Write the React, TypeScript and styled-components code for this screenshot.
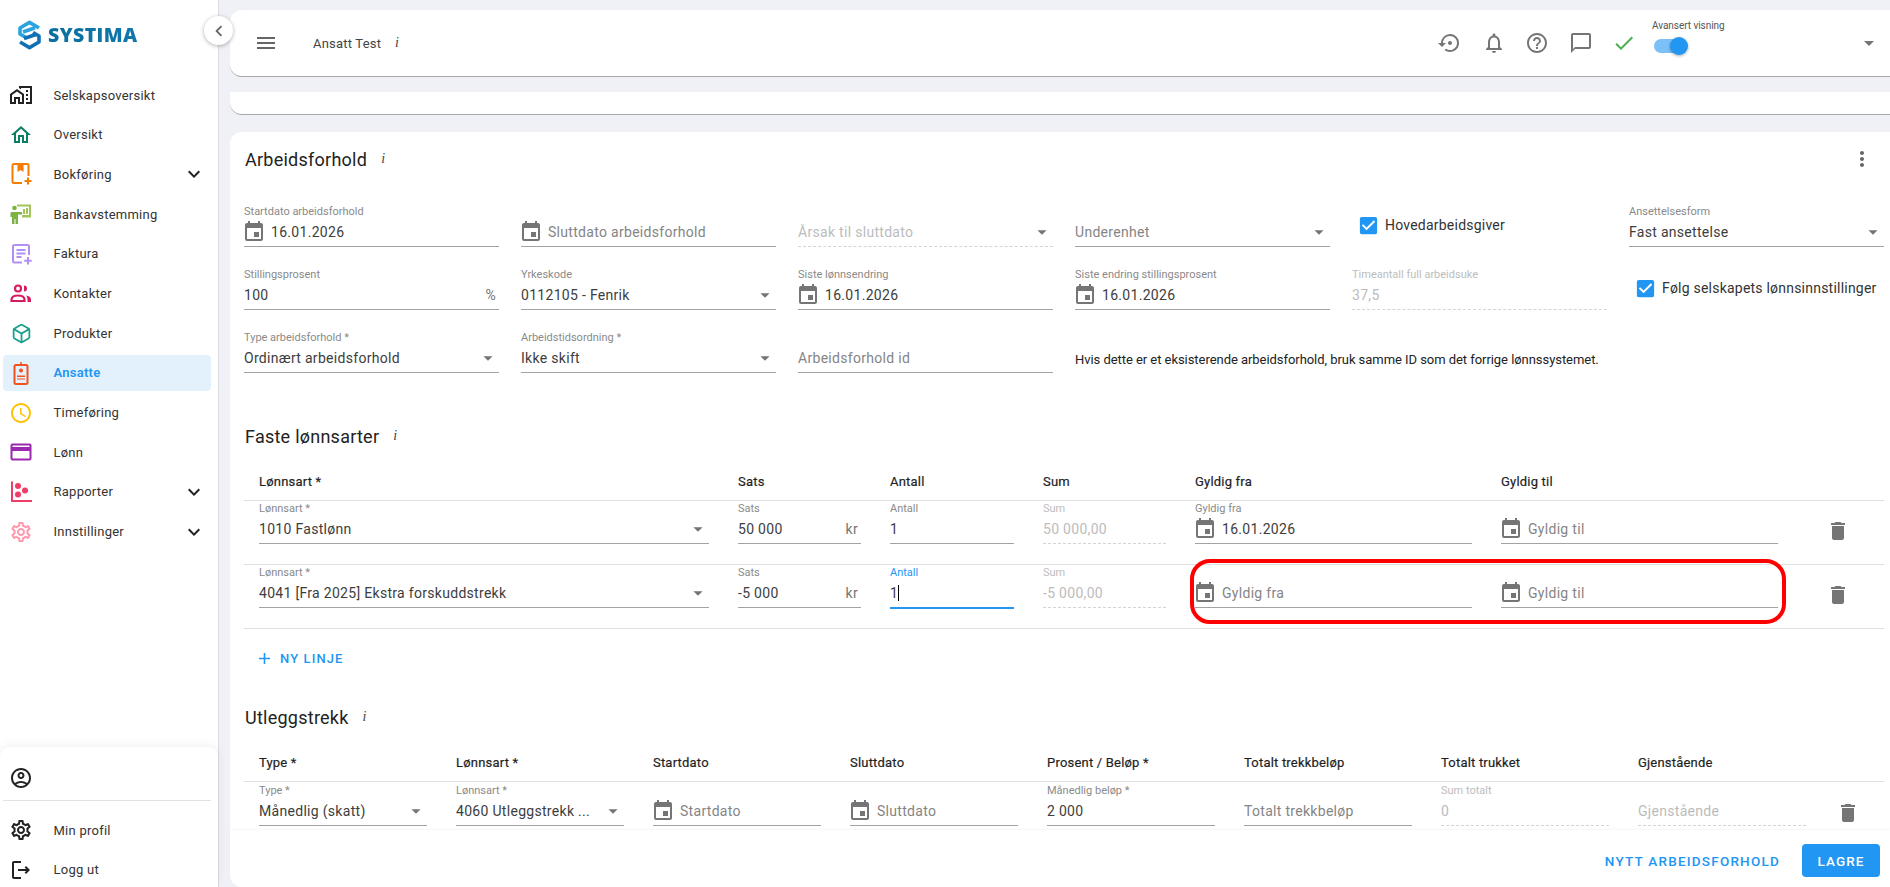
import React from "react";
import styled, { createGlobalStyle } from "styled-components";
import {
  MdAdd, MdArrowDropDown, MdCheck, MdCheckBox, MdChevronLeft, MdChatBubbleOutline, MdDelete, MdEvent,
  MdExpandMore, MdHelpOutline, MdMenu, MdMoreVert, MdNotificationsNone, MdOutlineAccessTime,
  MdOutlineAccountCircle, MdOutlineHome, MdOutlineHomeWork, MdOutlineLogout,
  MdOutlineSettings, MdSettingsBackupRestore,
} from "react-icons/md";
import { Box } from "lucide-react";

const Global = createGlobalStyle`
  html, body { margin: 0; height: 100%; overflow: hidden; background: #f0f1f7; }
  body { font-family: Roboto, "Liberation Sans", sans-serif; color: #333; }
  * { box-sizing: border-box; }
`;

const Page = styled.div`display: flex; width: 1890px; height: 887px; overflow: hidden;`;

/* ---------- sidebar ---------- */
const Sidebar = styled.aside`
  position: relative; flex: 0 0 219px; height: 887px; display: flex; flex-direction: column;
  background: #fff; border-right: 1px solid #dcdde2;
`;
const Brand = styled.div`height: 77px; flex: none; display: flex; align-items: flex-start; gap: 6px; padding: 20px 0 0 17px;`;
const BrandName = styled.span`
  font-family: "Open Sans", sans-serif; font-weight: 800; font-size: 19.5px; line-height: 30px; letter-spacing: .4px;
  background: linear-gradient(90deg, #0a6f9e, #1177ab); -webkit-background-clip: text; color: transparent;
`;
const Collapse = styled.button`
  position: absolute; left: 204px; top: 16px; width: 29px; height: 29px; border: 0; border-radius: 50%; padding: 0;
  background: #fff; box-shadow: 0 1px 4px rgba(0,0,0,.3); display: flex; align-items: center; justify-content: center;
  color: #666; font-size: 22px;
`;
const Nav = styled.nav`display: flex; flex-direction: column; gap: 3.7px; flex: 1;`;
const NavRow = styled.div<{ $active?: boolean }>`
  height: 36px; margin: 0 7px 0 3px; border-radius: 4px; padding: 0 5px 0 6px; display: flex; align-items: center;
  font-size: 13px; letter-spacing: .25px; color: ${(p) => (p.$active ? "#2196f3" : "#333")};
  font-weight: ${(p) => (p.$active ? 600 : 400)}; background: ${(p) => (p.$active ? "#e3f1fc" : "transparent")};
`;
const NavIcon = styled.span<{ $color?: string }>`
  flex: 0 0 24px; height: 24px; display: flex; align-items: center; justify-content: center; margin-right: 20.5px;
  color: ${(p) => p.$color || "#222"}; font-size: 24px;
`;
const NavChevron = styled.span`margin-left: auto; display: flex; font-size: 24px; color: #222;`;
const UserPanel = styled.div`
  height: 140px; flex: none; background: #fff; border-radius: 10px 10px 0 0; box-shadow: 0 -2px 8px rgba(0,0,0,.06); padding-top: 13px;
`;
const UserRow = styled.div`
  height: 41px; margin: 0 7px 0 3px; padding: 0 6px 5px; border-bottom: 1px solid #e2e2e2; display: flex; align-items: center;
`;
const PanelLinks = styled.div`display: flex; flex-direction: column; gap: 3.6px; padding-top: 11px;`;

/* ---------- main ---------- */
const Main = styled.main`flex: 1; min-width: 0; height: 887px; display: flex; flex-direction: column; padding: 10px 0 0 11px;`;
const TopBar = styled.header`
  flex: none; height: 67px; background: #fff; border-radius: 12px 0 0 12px; border-bottom: 1px solid #a8a8a8;
  display: flex; align-items: center; padding: 0 9px 0 24px; color: #757575;
`;
const Hamburger = styled.span`display: flex; font-size: 24px; color: #666; margin-right: 35px;`;
const PageTitle = styled.span`font-size: 13px; letter-spacing: .2px; color: #444; margin-right: 14px;`;
const InfoMark = styled.i`
  font-family: "Liberation Serif", serif; font-size: 14px; color: #444; font-style: italic;
`;
const ToolIcons = styled.div`margin-left: auto; display: flex; align-items: center; gap: 19.5px; font-size: 24px;`;
const ToolIcon = styled.span<{ $color?: string }>`display: flex; font-size: 24px; color: ${(p) => p.$color || "#757575"};`;
const ToggleBox = styled.div`
  width: 70px; margin: -7px 135px 0 16px; height: 40px; display: flex; flex-direction: column;
`;
const ToggleLabel = styled.span`font-size: 10px; line-height: 12px; letter-spacing: -.05px; color: #555; white-space: nowrap;`;
const ToggleTrack = styled.span`
  position: relative; display: block; width: 32px; height: 14px; margin: 7px 0 0 2px; border-radius: 7px; background: #7cc0f8;
`;
const ToggleThumb = styled.span`
  position: absolute; left: 16px; top: -2px; width: 18px; height: 18px; border-radius: 50%; background: #2196f3;
  box-shadow: 0 1px 3px rgba(0,0,0,.35);
`;
const Strip = styled.div`
  flex: none; height: 23px; margin: 15px 0 17px; background: #fff; border-radius: 0 0 0 12px; border-bottom: 1px solid #a8a8a8;
`;
const Card = styled.section`
  flex: 1; min-height: 0; overflow: hidden; background: #fff; border-radius: 12px 0 0 0; padding: 16px 6px 0 14px; position: relative;
`;
const SectionHead = styled.div<{ $top?: number }>`
  height: 22px; margin-top: ${(p) => p.$top || 0}px; display: flex; align-items: center; gap: 14px;
`;
const SectionTitle = styled.h2`margin: 0; padding-left: 1px; font-size: 18px; font-weight: 400; letter-spacing: .25px; color: #222;`;
const More = styled.span`margin-left: auto; margin-right: 10px; display: flex; font-size: 24px; color: #666;`;
const FormGrid = styled.div`
  display: grid; grid-template-columns: repeat(6, 255px); column-gap: 22px; row-gap: 21px; margin-top: 35px;
`;
const FieldBox = styled.div`height: 42px; display: flex; flex-direction: column; min-width: 0;`;
const FieldLabel = styled.label<{ $tone?: string }>`
  height: 12px; font-size: 11px; line-height: 14px; white-space: nowrap;
  color: ${(p) => p.$tone === "blue" ? "#2196f3" : p.$tone === "off" ? "#bdbdbd" : "#8a8a8a"};
`;
const FieldInput = styled.div<{ $tone?: string }>`
  height: 30px; display: flex; align-items: center; min-width: 0; font-size: 14px; letter-spacing: .3px; white-space: nowrap;
  border-bottom: 1px ${(p) => (p.$tone === "off" ? "dashed #d4d4d4" : "solid #a3a3a3")};
  ${(p) => p.$tone === "blue" && "border-bottom-color: #2196f3; box-shadow: 0 1px 0 #2196f3;"}
`;
const ValueText = styled.span<{ $tone?: string }>`
  flex: 1; min-width: 0; overflow: hidden; color: ${(p) => p.$tone === "ph" ? "#858585" : p.$tone === "off" ? "#bcbcbc" : "#3d3d3d"};
`;
const DateIcon = styled.span`display: flex; font-size: 24px; color: #757575; margin: 0 5px 0 -2px;`;
const Caret = styled.span`display: inline-block; width: 1px; height: 16px; background: #000; vertical-align: -3px;`;
const Suffix = styled.span`color: #757575; padding-right: 3px; font-size: 14px;`;
const SelectArrow = styled.span`display: flex; font-size: 22px; color: #757575;`;
const CheckLine = styled.div`
  height: 42px; display: flex; align-items: center; gap: 5px; padding: 0 0 2px 5px; font-size: 14px; letter-spacing: .22px;
  color: #333; white-space: nowrap; & svg { color: #2196f3; font-size: 23px; flex: none; }
`;
const Note = styled.div`grid-column: span 3; height: 42px; padding-top: 21px; font-size: 13px; line-height: 16px; letter-spacing: -.05px; color: #222; white-space: nowrap;`;
const TableHeadRow = styled.div<{ $cols: string }>`
  display: grid; grid-template-columns: ${(p) => p.$cols}; column-gap: 29px; height: 37px; margin-top: 17px; padding: 0 15px 1px; align-items: center;
  border-bottom: 1px solid #e0e0e0; font-size: 13px; font-weight: 400; letter-spacing: .2px; color: #1f1f1f; -webkit-text-stroke: .2px #1f1f1f;
`;
const TableRow = styled.div<{ $cols: string; $pad?: number }>`
  display: grid; grid-template-columns: ${(p) => p.$cols}; column-gap: 29px; height: 64px; padding: ${(p) => p.$pad ?? 1}px 15px 0; border-bottom: 1px solid #e0e0e0;
`;
const TrashCell = styled.div`display: flex; justify-content: center; padding-top: 17px; font-size: 24px; color: #757575;`;
const AddLine = styled.button`
  height: 30px; margin: 14px 0 1px 11px; border: 0; background: none; padding: 0; display: flex; align-items: center; gap: 6px; color: #2196f3;
  font: 500 13px Roboto, sans-serif; letter-spacing: 1.1px; & svg { font-size: 19px; }
`;
const FooterBar = styled.footer`
  flex: none; height: 57px; background: #fff; border-radius: 0 0 0 12px; box-shadow: 0 -1px 2px rgba(0,0,0,.04); display: flex; align-items: center; justify-content: flex-end;
  padding: 4px 10px 0 0; gap: 22px; position: relative;
`;
const TextBtn = styled.button`border: 0; background: none; padding: 0; color: #2196f3; font: 500 13.5px Roboto, sans-serif; letter-spacing: 1.22px;`;
const PrimaryBtn = styled.button`
  width: 78px; height: 33px; border: 0; border-radius: 4px; background: #2196f3; color: #fff; font: 500 13.5px Roboto, sans-serif; letter-spacing: 1.1px;
`;
const Annotation = styled.div`
  position: absolute; left: 960px; top: 427px; width: 596px; height: 65px; border: 4px solid #f00; border-radius: 20px; pointer-events: none;
`;

/* ---------- drawn icons ---------- */
const Logo = () => (
  <svg width="25" height="30" viewBox="0 0 25 30" fill="none" strokeWidth="3.6" strokeLinejoin="round">
    <path d="M22 8 L12.5 2.4 L3 8 V14 L9 17.5" stroke="#2aa3df" />
    <path d="M6 12 L18 7.8" stroke="#2aa3df" />
    <path d="M7 18.5 L19 14.5" stroke="#1270b4" />
    <path d="M16 12.5 L22 16 V22 L12.5 27.6 L3 22" stroke="#1270b4" />
  </svg>
);
const BookIcon = () => (
  <svg width="24" height="24" viewBox="0 0 24 24" fill="none">
    <path d="M13 21H5a1.5 1.5 0 0 1-1.5-1.5v-16A1.5 1.5 0 0 1 5 2h13a1.5 1.5 0 0 1 1.5 1.5V14" stroke="#f57c00" strokeWidth="2" />
    <path d="M8.5 2h6v8l-3-2-3 2z" fill="#f57c00" />
    <path d="M19 15.5v7M15.5 19h7" stroke="#f57c00" strokeWidth="2" />
  </svg>
);
const BankIcon = () => (
  <svg width="24" height="24" viewBox="0 0 24 24">
    <path d="M8 2.5h14v13H13v-2.5h7V4.5H8z" fill="#a4c45a" />
    <path d="M14 12V7h2v5zM17 12V6h2v6z" fill="#a4c45a" />
    <circle cx="5.5" cy="6" r="2.3" fill="#7cb342" />
    <path d="M2 10h11v2.5H9V22H6.5v-5h-1v5H3v-7H1.5v-3.5A1.5 1.5 0 0 1 2 10z" fill="#7cb342" />
  </svg>
);
const InvoiceIcon = () => (
  <svg width="24" height="24" viewBox="0 0 24 24" fill="none" stroke="#b190f5" strokeWidth="2">
    <path d="M13 20.5H5.5A1.5 1.5 0 0 1 4 19V4.5A1.5 1.5 0 0 1 5.500 3h13A1.5 1.5 0 0 1 20 4.500V13" />
    <path d="M7.500 8h9M7.500 11.500h9M7.500 15h5" />
    <path d="M19 15v7.500M15.200 18.800h7.500" />
  </svg>
);
const PeopleIcon = () => (
  <svg width="24" height="24" viewBox="0 0 24 24" fill="none">
    <circle cx="9" cy="7.500" r="3" stroke="#d81b60" strokeWidth="2.2" />
    <path d="M15 4.500a3 3 0 0 1 0 6z" fill="#d81b60" />
    <path d="M2.500 20v-1.500C2.500 16 5.500 14.500 9 14.500s6.500 1.500 6.500 4V20z" stroke="#d81b60" strokeWidth="2.2" />
    <path d="M17 14.500c2.800.3 5 1.700 5 4V21h-3.500v-2.500c0-1.600-.6-2.900-1.500-4z" fill="#d81b60" />
  </svg>
);
const BadgeIcon = () => (
  <svg width="24" height="24" viewBox="0 0 24 24" fill="none">
    <rect x="5.500" y="4" width="13" height="19" rx="1.500" stroke="#f4511e" strokeWidth="2" />
    <path d="M12 1v4" stroke="#f4511e" strokeWidth="1.5" />
    <circle cx="12" cy="9.500" r="2" fill="#f4511e" />
    <path d="M8 14.500h8v1.500H8zM8 17.500h8v1H8z" fill="#f4511e" />
  </svg>
);
const ReportIcon = () => (
  <svg width="24" height="24" viewBox="0 0 24 24" fill="#ef3d67">
    <path d="M2 1.500h2V20h19v2H2z" />
    <circle cx="9" cy="6" r="3" />
    <circle cx="9" cy="14.500" r="3" />
    <circle cx="16" cy="10.500" r="3" />
  </svg>
);
const CardIcon = () => (
  <svg width="24" height="24" viewBox="0 0 24 24" fill="none">
    <rect x="2.500" y="4.500" width="19" height="15" rx="1" stroke="#9c27b0" strokeWidth="2" />
    <rect x="3" y="7" width="18" height="4" fill="#9c27b0" />
  </svg>
);

/* ---------- field ---------- */
type FieldProps = {
  label?: string; value?: string; placeholder?: string; kind?: "date" | "select" | "text";
  suffix?: string; off?: boolean; focus?: boolean;
};
const Field = ({ label, value, placeholder, kind = "text", suffix, off, focus }: FieldProps) => {
  const tone = off ? "off" : focus ? "blue" : undefined;
  return (
    <FieldBox>
      <FieldLabel $tone={tone}>{label}</FieldLabel>
      <FieldInput $tone={tone}>
        {kind === "date" && <DateIcon><MdEvent /></DateIcon>}
        <ValueText $tone={off ? "off" : value ? undefined : "ph"}>
          {value || placeholder}{focus && <Caret />}
        </ValueText>
        {suffix && <Suffix>{suffix}</Suffix>}
        {kind === "select" && <SelectArrow><MdArrowDropDown /></SelectArrow>}
      </FieldInput>
    </FieldBox>
  );
};

const navItems: { label: string; icon: React.ReactNode; color?: string; chevron?: boolean; active?: boolean }[] = [
  { label: "Selskapsoversikt", icon: <MdOutlineHomeWork />, color: "#222" },
  { label: "Oversikt", icon: <MdOutlineHome />, color: "#0b7f63" },
  { label: "Bokføring", icon: <BookIcon />, chevron: true },
  { label: "Bankavstemming", icon: <BankIcon /> },
  { label: "Faktura", icon: <InvoiceIcon /> },
  { label: "Kontakter", icon: <PeopleIcon /> },
  { label: "Produkter", icon: <Box size={21} strokeWidth={2} />, color: "#17a08c" },
  { label: "Ansatte", icon: <BadgeIcon />, active: true },
  { label: "Timeføring", icon: <MdOutlineAccessTime />, color: "#ffc107" },
  { label: "Lønn", icon: <CardIcon /> },
  { label: "Rapporter", icon: <ReportIcon />, chevron: true },
  { label: "Innstillinger", icon: <MdOutlineSettings />, color: "#ff9aac", chevron: true },
];

const wageCols = "450px 123px 124px 123px 277px 277px 62px";
const debtCols = "repeat(8, 168px) 26px";

export default function App() {
  return (
    <Page>
      <Global />
      <Sidebar>
        <Brand><Logo /><BrandName>SYSTIMA</BrandName></Brand>
        <Collapse><MdChevronLeft /></Collapse>
        <Nav>
          {navItems.map((n) => (
            <NavRow key={n.label} $active={n.active}>
              <NavIcon $color={n.color}>{n.icon}</NavIcon>
              {n.label}
              {n.chevron && <NavChevron><MdExpandMore /></NavChevron>}
            </NavRow>
          ))}
        </Nav>
        <UserPanel>
          <UserRow><NavIcon><MdOutlineAccountCircle /></NavIcon></UserRow>
          <PanelLinks>
            <NavRow><NavIcon><MdOutlineSettings /></NavIcon>Min profil</NavRow>
            <NavRow><NavIcon><MdOutlineLogout /></NavIcon>Logg ut</NavRow>
          </PanelLinks>
        </UserPanel>
      </Sidebar>
      <Main>
        <TopBar>
          <Hamburger><MdMenu /></Hamburger>
          <PageTitle>Ansatt Test</PageTitle>
          <InfoMark>i</InfoMark>
          <ToolIcons>
            <ToolIcon><MdSettingsBackupRestore /></ToolIcon>
            <ToolIcon><MdNotificationsNone /></ToolIcon>
            <ToolIcon><MdHelpOutline /></ToolIcon>
            <ToolIcon><MdChatBubbleOutline /></ToolIcon>
            <ToolIcon $color="#4caf50"><MdCheck /></ToolIcon>
          </ToolIcons>
          <ToggleBox>
            <ToggleLabel>Avansert visning</ToggleLabel>
            <ToggleTrack><ToggleThumb /></ToggleTrack>
          </ToggleBox>
          <ToolIcon><MdArrowDropDown /></ToolIcon>
        </TopBar>
        <Strip />
        <Card>
          <SectionHead>
            <SectionTitle>Arbeidsforhold</SectionTitle>
            <InfoMark>i</InfoMark>
            <More><MdMoreVert /></More>
          </SectionHead>
          <FormGrid>
            <Field label="Startdato arbeidsforhold" value="16.01.2026" kind="date" />
            <Field placeholder="Sluttdato arbeidsforhold" kind="date" />
            <Field placeholder="Årsak til sluttdato" kind="select" off />
            <Field placeholder="Underenhet" kind="select" />
            <CheckLine><MdCheckBox />Hovedarbeidsgiver</CheckLine>
            <Field label="Ansettelsesform" value="Fast ansettelse" kind="select" />
            <Field label="Stillingsprosent" value="100" suffix="%" />
            <Field label="Yrkeskode" value="0112105 - Fenrik" kind="select" />
            <Field label="Siste lønnsendring" value="16.01.2026" kind="date" />
            <Field label="Siste endring stillingsprosent" value="16.01.2026" kind="date" />
            <Field label="Timeantall full arbeidsuke" value="37,5" off />
            <CheckLine><MdCheckBox />Følg selskapets lønnsinnstillinger</CheckLine>
            <Field label="Type arbeidsforhold *" value="Ordinært arbeidsforhold" kind="select" />
            <Field label="Arbeidstidsordning *" value="Ikke skift" kind="select" />
            <Field placeholder="Arbeidsforhold id" />
            <Note>Hvis dette er et eksisterende arbeidsforhold, bruk samme ID som det forrige lønnssystemet.</Note>
          </FormGrid>

          <SectionHead $top={52}>
            <SectionTitle>Faste lønnsarter</SectionTitle>
            <InfoMark>i</InfoMark>
          </SectionHead>
          <TableHeadRow $cols={wageCols}>
            <span>Lønnsart *</span><span>Sats</span><span>Antall</span><span>Sum</span><span>Gyldig fra</span><span>Gyldig til</span>
          </TableHeadRow>
          <TableRow $cols={wageCols}>
            <Field label="Lønnsart *" value="1010 Fastlønn" kind="select" />
            <Field label="Sats" value="50 000" suffix="kr" />
            <Field label="Antall" value="1" />
            <Field label="Sum" value="50 000,00" off />
            <Field label="Gyldig fra" value="16.01.2026" kind="date" />
            <Field placeholder="Gyldig til" kind="date" />
            <TrashCell><MdDelete /></TrashCell>
          </TableRow>
          <TableRow $cols={wageCols}>
            <Field label="Lønnsart *" value="4041 [Fra 2025] Ekstra forskuddstrekk" kind="select" />
            <Field label="Sats" value="-5 000" suffix="kr" />
            <Field label="Antall" value="1" focus />
            <Field label="Sum" value="-5 000,00" off />
            <Field placeholder="Gyldig fra" kind="date" />
            <Field placeholder="Gyldig til" kind="date" />
            <TrashCell><MdDelete /></TrashCell>
          </TableRow>
          <AddLine><MdAdd />NY LINJE</AddLine>

          <SectionHead $top={33}>
            <SectionTitle>Utleggstrekk</SectionTitle>
            <InfoMark>i</InfoMark>
          </SectionHead>
          <TableHeadRow $cols={debtCols}>
            <span>Type *</span><span>Lønnsart *</span><span>Startdato</span><span>Sluttdato</span><span>Prosent / Beløp *</span>
            <span>Totalt trekkbeløp</span><span>Totalt trukket</span><span>Gjenstående</span>
          </TableHeadRow>
          <TableRow $cols={debtCols} $pad={2}>
            <Field label="Type *" value="Månedlig (skatt)" kind="select" />
            <Field label="Lønnsart *" value="4060 Utleggstrekk ..." kind="select" />
            <Field placeholder="Startdato" kind="date" />
            <Field placeholder="Sluttdato" kind="date" />
            <Field label="Månedlig beløp *" value="2 000" />
            <Field placeholder="Totalt trekkbeløp" />
            <Field label="Sum totalt" value="0" off />
            <Field placeholder="Gjenstående" off />
            <TrashCell><MdDelete /></TrashCell>
          </TableRow>
          <Annotation />
        </Card>
        <FooterBar>
          <TextBtn>NYTT ARBEIDSFORHOLD</TextBtn>
          <PrimaryBtn>LAGRE</PrimaryBtn>
        </FooterBar>
      </Main>
    </Page>
  );
}
